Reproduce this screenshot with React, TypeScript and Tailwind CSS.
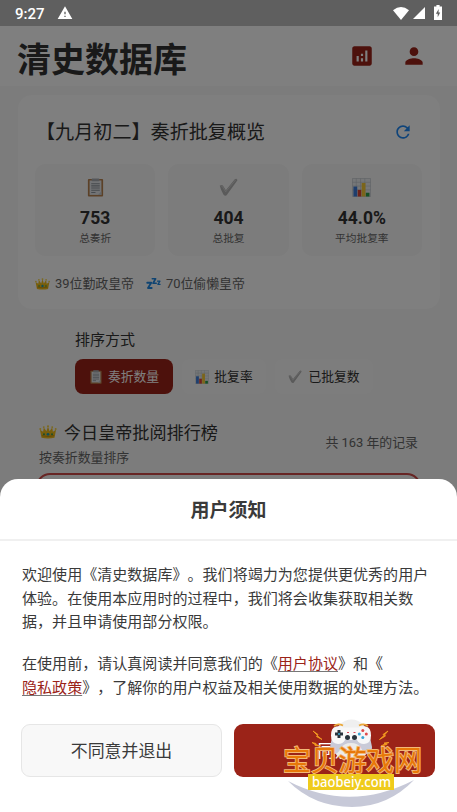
import React from "react";
import { MdAnalytics, MdPerson, MdRefresh, MdWarning } from "react-icons/md";

function ClipboardIcon({ className }: { className: string }) {
  return (
    <svg viewBox="0 0 20 20" className={className}>
      <rect x="2" y="1" width="16" height="18.5" rx="1" fill="#b9824f" />
      <rect x="3.8" y="2.6" width="12.4" height="15.2" fill="#e4e7ea" />
      <rect x="6" y="0.4" width="8" height="3" rx="0.8" fill="#a8adb3" />
      <path d="M5.5 6h9M5.5 8.3h9M5.5 10.6h9M5.5 12.9h9M5.5 15.2h4.5" stroke="#8d949c" strokeWidth="1.1" />
      <path d="M16.2 14l-3.6 3.8h3.6z" fill="#c3c9d0" />
    </svg>
  );
}

function CheckIcon({ className }: { className: string }) {
  return (
    <svg viewBox="0 0 20 20" className={className}>
      <path d="M0.8 8.2Q3 6.6 4.4 8.4L7.2 13 16.6 1.4Q18.8-.4 19.4 2.4L8.6 17.4Q6.8 19.8 4.8 17.6Q2 13 .8 8.2z" fill="#b4b4b4" />
      <path d="M1.8 8.6Q3 8 3.8 9.2L7 14.6 17.6 1.8" fill="none" stroke="#d2d2d2" strokeWidth="1" />
    </svg>
  );
}

function ChartIcon({ className }: { className: string }) {
  return (
    <svg viewBox="0 0 20 20" className={className}>
      <rect x="0.5" y="0.5" width="19" height="19" fill="#eceff1" />
      <path d="M.5 4.5h19M.5 8.5h19M.5 12.5h19M4.5.5v19M9 .5v19M13.5.5v19M.5.5h19v19H.5z" fill="none" stroke="#b8c0c6" strokeWidth="0.6" />
      <rect x="1.5" y="9" width="4" height="10.5" fill="#3f7ddb" />
      <rect x="6" y="12.5" width="3.8" height="7" fill="#df4435" />
      <rect x="10.2" y="5.2" width="4" height="14.3" fill="#f7cb35" />
      <rect x="14.6" y="15.5" width="3.8" height="4" fill="#2ba04a" />
    </svg>
  );
}

function CrownIcon({ className }: { className: string }) {
  return (
    <svg viewBox="0 0 20 16" className={className}>
      <path d="M2.6 14.5L.8 5.4l3.600 2.400.8-5 3 4.400L10 1.600l1.800 5.600 3-4.400.8 5 3.600-2.400-1.800 9.100Q10 16.400 2.600 14.500z" fill="#f0bd18" />
      <path d="M3 12.2Q10 14 17 12.2" stroke="#c58a0c" strokeWidth="1" fill="none" />
      <g fill="#f8d33c">
        <circle cx="1.2" cy="4.6" r="1.1" />
        <circle cx="5.2" cy="2.4" r="1.1" />
        <circle cx="10" cy="1.4" r="1.2" />
        <circle cx="14.8" cy="2.4" r="1.1" />
        <circle cx="18.8" cy="4.6" r="1.1" />
      </g>
      <circle cx="10" cy="10.6" r="1.6" fill="#1f9bb0" />
      <circle cx="5.4" cy="10.6" r="1.1" fill="#2c9a58" />
      <circle cx="14.6" cy="10.6" r="1.1" fill="#2c9a58" />
    </svg>
  );
}

function SleepIcon({ className }: { className: string }) {
  return (
    <svg viewBox="0 0 20 17" className={className} fill="none" stroke="#1e88e5" strokeLinejoin="round" strokeLinecap="round">
      <path d="M1.6 7.500h5.4l-4.4 7h5" strokeWidth="2.4" />
      <path d="M8.4 2.2h4.4l-3.4 6h4.2" strokeWidth="2.2" />
      <path d="M15.4 5.4h3.2l-2.8 4.2h3" strokeWidth="1.7" />
    </svg>
  );
}

const stats = [
  { icon: <ClipboardIcon className="size-[19px]" />, value: "753", label: "总奏折" },
  { icon: <CheckIcon className="size-[19px]" />, value: "404", label: "总批复" },
  { icon: <ChartIcon className="size-[19px]" />, value: "44.0%", label: "平均批复率" },
];

function StatusBar() {
  return (
    <div className="relative z-10 flex h-[26px] items-center bg-[#5f5f5f] pl-[15px] pr-[15px] text-white">
      <span className="pt-[2px] text-[15px] font-medium leading-none">9:27</span>
      <MdWarning className="ml-[12px] size-[16px]" />
      <div className="ml-auto flex items-center">
        <svg viewBox="0 0 16 13" className="h-[13px] w-[16px]" fill="white">
          <path d="M8 13L0 3.2Q8-3.2 16 3.2z" />
        </svg>
        <svg viewBox="0 0 12 12" className="ml-[4px] h-[12px] w-[12px]" fill="white">
          <path d="M12 0v12H0z" />
        </svg>
        <svg viewBox="0 0 8 15" className="mb-[1px] ml-[9px] h-[15px] w-[8px]" fill="white">
          <path d="M2.4 0h3.2v1.6H8V15H0V1.6h2.4z" />
          <path d="M4.7 4L1.9 8.7h1.8v3.6l2.5-4.8H4.5z" fill="#5f5f5f" />
        </svg>
      </div>
    </div>
  );
}

function Overview() {
  return (
    <div className="ml-[18px] mr-[17px] mt-[9px] h-[214px] rounded-[14px] bg-[#fefefe] pl-[17px] pr-[18px] pt-[24px]">
      <div className="flex h-[26px] items-center justify-between">
        <h2 className="pl-[1px] pt-[2px] text-[19.1px] leading-none text-[#333]">【九月初二】奏折批复概览</h2>
        <MdRefresh className="mr-[9px] size-[20px] text-[#1e88f5]" />
      </div>
      <div className="mt-[19px] grid grid-cols-3 gap-[13px]">
        {stats.map((s) => (
          <div key={s.label} className="flex h-[92px] flex-col items-center rounded-[11px] bg-[#f8f8f8] pt-[14px]">
            {s.icon}
            <b className="mt-[10px] text-[17.5px] font-bold leading-[22px] text-[#333]">{s.value}</b>
            <span className="mt-[2px] text-[10.7px] leading-[16px] text-[#666]">{s.label}</span>
          </div>
        ))}
      </div>
      <div className="mt-[17px] flex h-[21px] items-center text-[12.9px] text-[#666]">
        <CrownIcon className="h-[12px] w-[15px]" />
        <span className="ml-[5px]">39位勤政皇帝</span>
        <SleepIcon className="ml-[12px] h-[13px] w-[15px]" />
        <span className="ml-[5px]">70位偷懒皇帝</span>
      </div>
    </div>
  );
}

function SortBar() {
  return (
    <div className="ml-[75px] mt-[20px]">
      <div className="h-[22px] text-[15px] leading-[23px] text-[#333]">排序方式</div>
      <div className="mt-[8px] flex gap-[9px] text-[12.8px] text-[#333]">
        <button className="flex h-[35px] w-[98px] items-center justify-center gap-[5px] rounded-[8px] bg-[#9b2318] pt-[1px] text-white">
          <ClipboardIcon className="size-[14px]" />
          奏折数量
        </button>
        <button className="flex h-[35px] w-[84px] items-center justify-center gap-[5px] rounded-[8px] bg-[#fbfbfb] pt-[1px]">
          <ChartIcon className="size-[14px]" />
          批复率
        </button>
        <button className="flex h-[35px] w-[98px] items-center justify-center gap-[6px] rounded-[8px] bg-[#fbfbfb] pt-[1px]">
          <CheckIcon className="size-[14px]" />
          已批复数
        </button>
      </div>
    </div>
  );
}

function Ranking() {
  return (
    <div className="mx-[39px] mt-[26px]">
      <div className="flex justify-between">
        <div>
          <div className="flex h-[25px] items-center">
            <CrownIcon className="mb-[2px] h-[14px] w-[18px]" />
            <span className="ml-[7px] pt-[1px] text-[17.1px] leading-[25px] text-[#333]">今日皇帝批阅排行榜</span>
          </div>
          <div className="mt-[3px] text-[12.900px] leading-[20px] text-[#666]">按奏折数量排序</div>
        </div>
        <span className="mt-[13px] text-[12.9px] leading-[20px] text-[#666]">共 163 年的记录</span>
      </div>
      <div className="-mx-[3px] mt-[5px] h-[60px] rounded-[14px] border-2 border-[#cf4b48] bg-[#fafafa]" />
    </div>
  );
}

function Watermark() {
  return (
    <svg viewBox="0 0 150 95" className="pointer-events-none absolute left-[280px] top-[717px] h-[95px] w-[150px]">
      <path d="M8 64Q70 96 134 63Q108 90 72 90Q34 90 8 64z" fill="#c7c9d8" />
      <circle cx="71.5" cy="18.5" r="16" fill="#efefef" />
      <ellipse cx="71" cy="34" rx="16" ry="9" fill="#ecebea" />
      <path d="M56 10q-3 1-4 10l-2 10q0 7 4 7 4 0 7-6 3-5 10-5t10 5q3 6 7 6 4 0 4-7l-2-10q-1-9-4-10-5-1-8 1H64q-3-2-8-1z" fill="#c9cad8" />
      <path d="M56 9.500q-5 1-5 9t7 8.500q5 0 7-4h12q2 4 7 4 7-.5 7-8.500t-5-9q-5-1-8 1H64q-3-2-8-1z" fill="#f7f7f8" />
      <path d="M54 9q4-3 9-.5M79 8.500q5-2.500 9 .5" stroke="#eba93a" strokeWidth="1.8" fill="none" />
      <path d="M59 13v8M55 17h8" stroke="#28333c" strokeWidth="3" />
      <circle cx="59" cy="17" r="1" fill="#3aaed8" />
      <g fill="#28333c">
        <circle cx="67.500" cy="20.500" r="2.500" />
        <circle cx="74.500" cy="20.500" r="2.500" />
      </g>
      <path d="M67 15.500h2M73.500 15.500h2" stroke="#d84a59" strokeWidth="1" />
      <circle cx="82.800" cy="13.500" r="1.500" fill="#df4c4c" />
      <circle cx="82.800" cy="20.500" r="1.500" fill="#39a4d4" />
      <circle cx="79.300" cy="17" r="1.500" fill="#39a4d4" />
      <circle cx="86.300" cy="17" r="1.500" fill="#df4c4c" />
      <path
        d="M33 14l5 3.500-1 1 5 4-5.500-3 1-1zM32 25.500l4 1v1l4 1.500-5-.5v-1zM108 14l-5 3.500 1 1-4.500 4 6-3.500-1-1zM109 25.500l-5 .5 1 1-4 2 6-1.500-1-1z"
        fill="#f39a20"
        stroke="#f39a20"
        strokeWidth="0.9"
      />
      <text
        x="3"
        y="53.5"
        textLength="139"
        fontSize="28"
        fill="#e87808"
        stroke="#f3b877"
        strokeWidth="1.8"
        paintOrder="stroke"
        className="font-['Noto_Sans_CJK_SC',sans-serif] font-normal"
      >
        宝贝游戏网
      </text>
      <rect x="28" y="57" width="86" height="16" fill="#efcb1c" />
      <text x="32" y="70" textLength="79" lengthAdjust="spacingAndGlyphs" fontSize="14.5" fill="white" className="font-['Noto_Sans',sans-serif] font-medium">
        baobeiy.com
      </text>
    </svg>
  );
}

function NoticeSheet() {
  return (
    <div className="absolute inset-x-0 bottom-0 h-[333px] rounded-t-[18px] bg-white text-[#3a3a3a]">
      <h3 className="h-[62px] border-b-2 border-[#f0f0f0] text-center text-[19px] font-bold leading-[63px]">用户须知</h3>
      <div className="whitespace-nowrap pl-[22px] pt-[23px] text-[15.05px] leading-[23.7px]">
        <p>
          欢迎使用《清史数据库》。我们将竭力为您提供更优秀的用户
          <br />
          体验。在使用本应用时的过程中，我们将会收集获取相关数
          <br />
          据，并且申请使用部分权限。
        </p>
        <p className="mt-[18px]">
          在使用前，请认真阅读并同意我们的《
          <a className="text-[#9b2318] underline decoration-[#777] decoration-1 underline-offset-2">用户协议</a>》和《
          <br />
          <a className="text-[#9b2318] underline decoration-[#777] decoration-1 underline-offset-2">隐私政策</a>
          》，了解你的用户权益及相关使用数据的处理方法。
        </p>
      </div>
      <div className="ml-[21px] mr-[22px] mt-[23px] grid grid-cols-2 gap-[12px] text-[16.9px]">
        <button className="h-[53px] rounded-[9px] border border-[#e6e6e6] bg-[#f8f8f8] pt-[3px]">不同意并退出</button>
        <button className="h-[53px] rounded-[9px] bg-[#9b2318] pt-[3px] text-white">同意</button>
      </div>
    </div>
  );
}

export default function App() {
  return (
    <div className="relative h-[812px] w-[457px] overflow-hidden bg-[#f8f8f8] font-[Roboto,'Noto_Sans_CJK_SC',sans-serif] [text-spacing-trim:space-all]">
      <StatusBar />
      <div className="flex h-[60px] items-center bg-[#fefefe] pl-[17px] pr-[30px]">
        <h1 className="pt-[8px] text-[34px] font-bold leading-none text-[#333]">清史数据库</h1>
        <MdAnalytics className="ml-auto size-[26px] text-[#9b2318]" />
        <MdPerson className="ml-[26px] size-[26px] text-[#9b2318]" />
      </div>
      <Overview />
      <SortBar />
      <Ranking />
      <div className="absolute inset-0 bg-black/50" />
      <NoticeSheet />
      <Watermark />
    </div>
  );
}
